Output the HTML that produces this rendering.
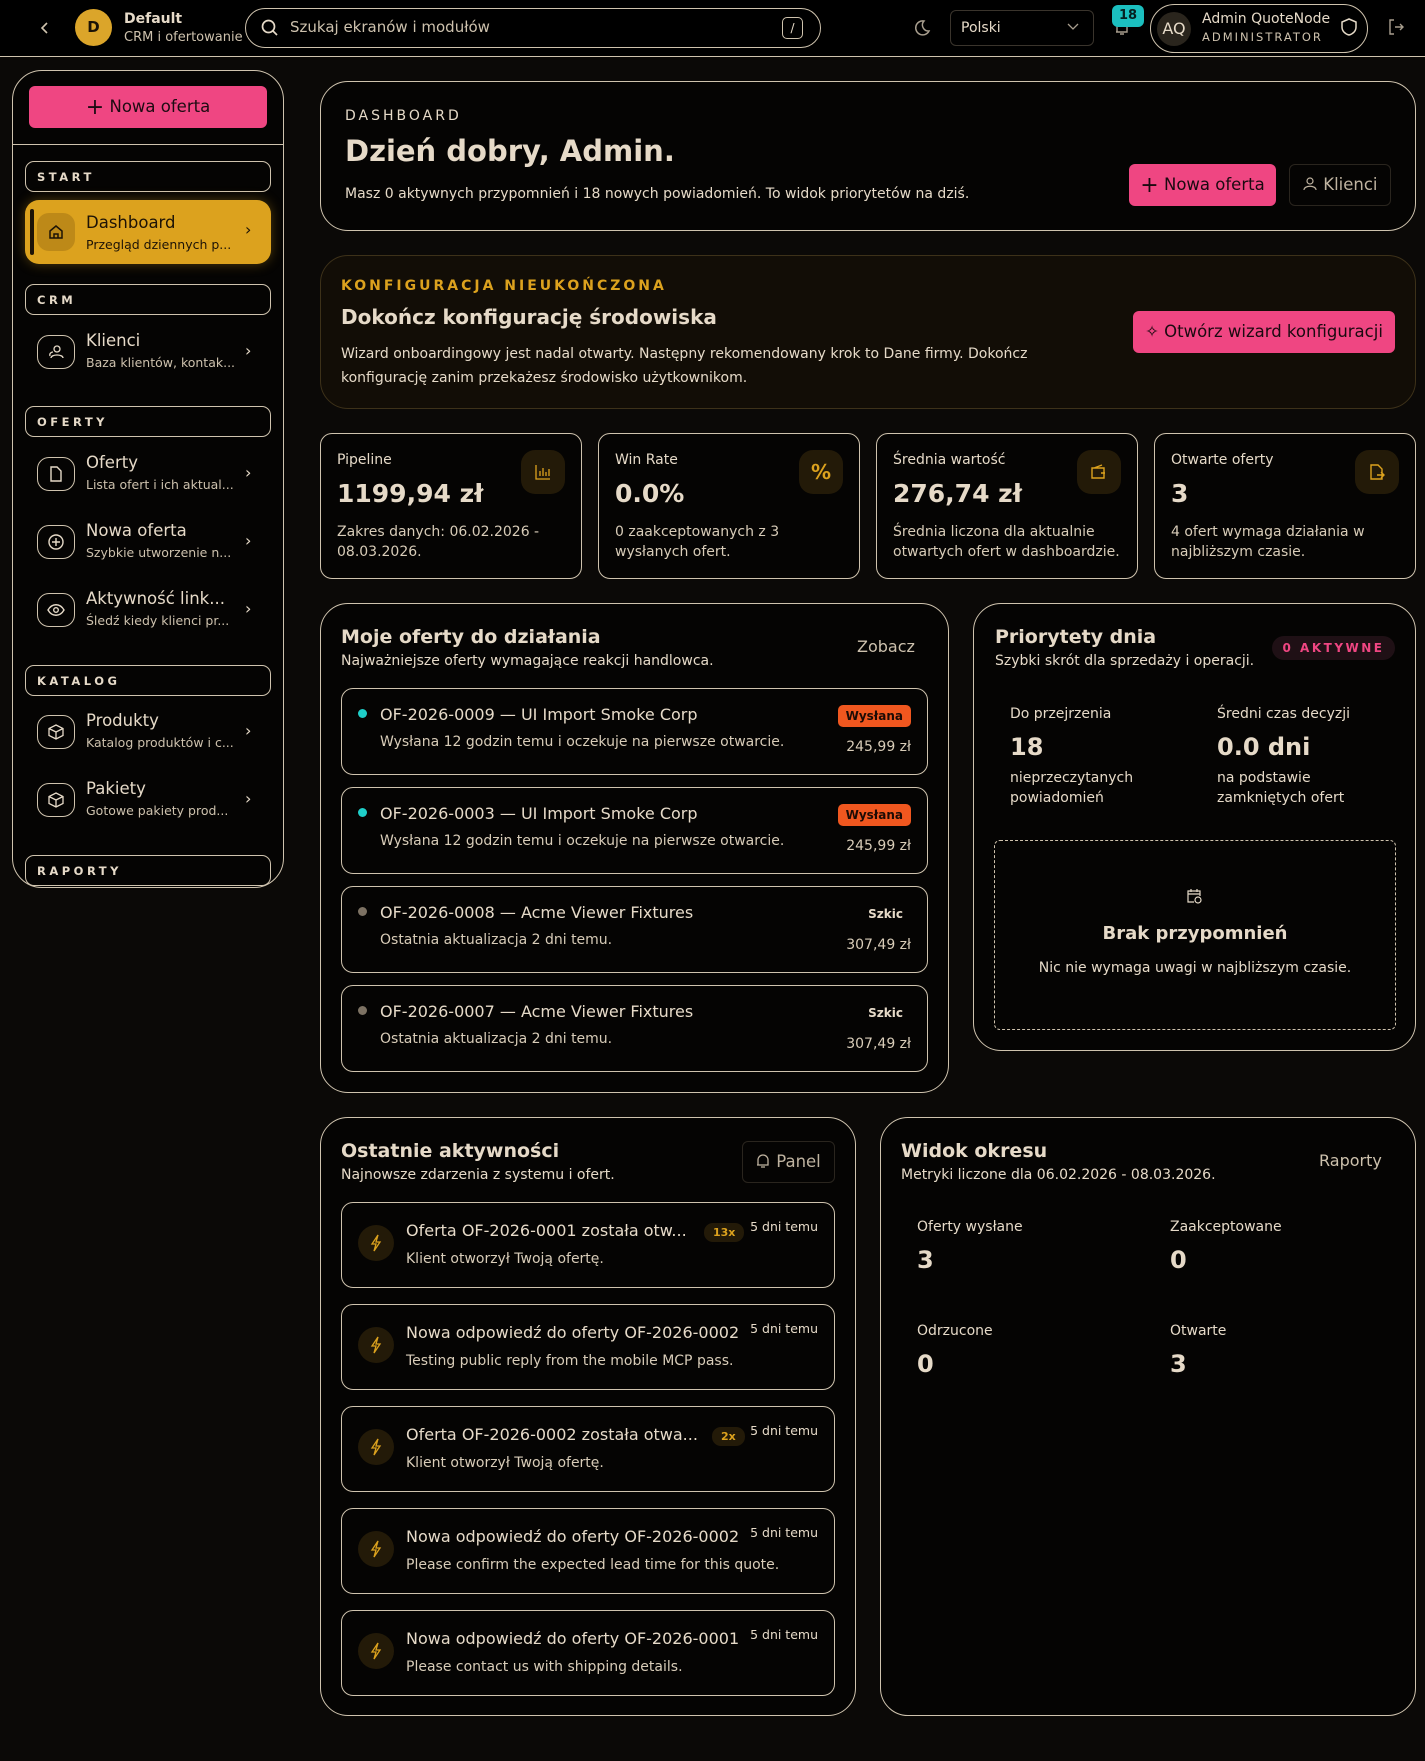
<!DOCTYPE html>
<html><head><meta charset="utf-8"><style>
*{box-sizing:border-box;margin:0;padding:0}
body{width:1425px;height:1761px;background:#0b0907;color:#e6dac8;font-family:"DejaVu Sans","Liberation Sans",sans-serif;position:relative;overflow:hidden;font-size:14px}
.a{position:absolute}
.card{position:absolute;border:1px solid #cfc3ae;border-radius:28px;background:#050403}
.box{position:absolute;border:1px solid #cfc3ae;border-radius:12px;background:#050403}
.muted{color:#cdc1ad}
.pink{background:#ef4682;color:#1a0a10;border-radius:6px}
.lbl{position:absolute;border:1px solid #cfc3ae;border-radius:9px;left:25px;width:246px;height:31px;font-size:11.5px;font-weight:bold;letter-spacing:3.5px;padding:8px 0 0 11px}
.nav{position:absolute;left:25px;width:246px;height:62px}
.nav .ic{position:absolute;left:12px;top:12px;width:38px;height:34px;border:1px solid #cfc3ae;border-radius:12px;display:flex;align-items:center;justify-content:center}
.nav .t{position:absolute;left:61px;top:8px;font-size:16.5px}
.nav .s{position:absolute;left:61px;top:32px;font-size:12.5px;color:#cdc1ad}
.nav .ch{position:absolute;left:220px;top:18px;font-size:16px}
.h3{font-size:19px;font-weight:bold}
.stat .l{position:absolute;left:16px;top:18px;font-size:14px}
.stat .v{position:absolute;left:16px;top:45px;font-size:25px;font-weight:bold}
.stat .d{position:absolute;left:16px;top:88px;font-size:14px;line-height:20px;color:#d8ccb8}
.stat .i{position:absolute;right:16px;top:16px;width:44px;height:44px;border-radius:14px;background:#231a08;display:flex;align-items:center;justify-content:center;color:#dca21e}
.off .dot{position:absolute;left:16px;top:20px;width:9px;height:9px;border-radius:50%}
.off .t{position:absolute;left:38px;top:16px;font-size:16px}
.off .s{position:absolute;left:38px;top:45px;font-size:14px;color:#d8ccb8}
.off .b{position:absolute;right:16px;top:16px;font-size:12px;font-weight:bold;padding:4px 8px}
.off .p{position:absolute;right:16px;top:50px;font-size:14px;color:#d8ccb8}
.act .ic{position:absolute;left:16px;top:22px;width:36px;height:36px;border-radius:50%;background:#231a08;display:flex;align-items:center;justify-content:center}
.act .t{position:absolute;left:64px;top:18px;font-size:16px}
.act .s{position:absolute;left:64px;top:48px;font-size:14px;color:#d8ccb8}
.act .tm{position:absolute;right:16px;top:16px;font-size:12.5px}
.act .x{position:absolute;top:20px;font-size:11px;font-weight:bold;color:#dca21e;background:#231a08;border-radius:9px;padding:3px 9px}
</style></head><body>
<!-- header -->
<div class="a" style="left:0;top:0;width:1425px;height:57px;border-bottom:1px solid #cfc3ae;background:#000"></div>
<svg class="a" style="left:38px;top:20px" width="14" height="16" viewBox="0 0 14 16"><path d="M9 3 L4 8 L9 13" stroke="#cfc3ae" stroke-width="1.6" fill="none"/></svg>
<div class="a" style="left:75px;top:9px;width:37px;height:37px;border-radius:50%;background:#dba52a;color:#1a1206;font-weight:bold;font-size:15px;text-align:center;line-height:37px">D</div>
<div class="a" style="left:124px;top:11px;font-weight:bold;font-size:14px">Default</div>
<div class="a muted" style="left:124px;top:30px;font-size:13px">CRM i ofertowanie</div>
<div class="a" style="left:245px;top:8px;width:576px;height:40px;border:1px solid #cfc3ae;border-radius:20px"></div>
<svg class="a" style="left:260px;top:18px" width="20" height="20" viewBox="0 0 20 20"><circle cx="8.5" cy="8.5" r="6" stroke="#e6dac8" stroke-width="1.7" fill="none"/><path d="M13 13 L17 17" stroke="#e6dac8" stroke-width="1.7"/></svg>
<div class="a muted" style="left:290px;top:18px;font-size:15px">Szukaj ekranów i modułów</div>
<div class="a" style="left:782px;top:17px;width:21px;height:22px;border:1px solid #cfc3ae;border-radius:5px;font-size:12px;text-align:center;line-height:20px">/</div>
<svg class="a" style="left:912px;top:18px" width="20" height="20" viewBox="0 0 20 20"><path d="M12 3 A7 7 0 1 0 17 13 A6 6 0 0 1 12 3Z" stroke="#a89e8e" stroke-width="1.5" fill="none"/></svg>
<div class="a" style="left:950px;top:10px;width:144px;height:36px;border:1px solid #3a342c;border-radius:6px;font-size:14px;padding:9px 0 0 10px">Polski</div>
<svg class="a" style="left:1066px;top:22px" width="14" height="10" viewBox="0 0 14 10"><path d="M2 2 L7 7 L12 2" stroke="#a89e8e" stroke-width="1.3" fill="none"/></svg>
<svg class="a" style="left:1112px;top:18px" width="20" height="20" viewBox="0 0 20 20"><path d="M5 14 V9 A5 5 0 0 1 15 9 V14 H4 M8 16 H12" stroke="#a89e8e" stroke-width="1.4" fill="none"/></svg>
<div class="a" style="left:1112px;top:5px;width:32px;height:22px;border-radius:6px;background:#1bbfbf;color:#062020;font-weight:bold;font-size:13px;text-align:center;line-height:22px">18</div>
<div class="a" style="left:1150px;top:4px;width:218px;height:49px;border:1px solid #cfc3ae;border-radius:25px"></div>
<div class="a" style="left:1157px;top:12px;width:34px;height:34px;border-radius:50%;background:#2a251d;font-size:16px;text-align:center;line-height:34px">AQ</div>
<div class="a" style="left:1202px;top:11px;font-size:14px">Admin QuoteNode</div>
<div class="a muted" style="left:1202px;top:30px;font-size:11.5px;letter-spacing:2px">ADMINISTRATOR</div>
<svg class="a" style="left:1340px;top:17px" width="18" height="20" viewBox="0 0 18 20"><path d="M9 2 L16 5 V10 C16 14 13 17 9 18 C5 17 2 14 2 10 V5Z" stroke="#e6dac8" stroke-width="1.5" fill="none"/></svg>
<svg class="a" style="left:1386px;top:17px" width="20" height="20" viewBox="0 0 20 20"><path d="M8 3 H4 V17 H8 M9 10 H17 M14 7 L17 10 L14 13" stroke="#a89e8e" stroke-width="1.4" fill="none"/></svg>

<!-- sidebar -->
<div class="a" style="left:12px;top:70px;width:272px;height:818px;border:1px solid #cfc3ae;border-radius:30px;background:#050403"></div>
<div class="a pink" style="left:29px;top:86px;width:238px;height:42px;color:#1d0b12;font-size:16.5px;text-align:center;line-height:42px"><span style="font-size:22px;vertical-align:-2px">+</span> Nowa oferta</div>
<div class="a" style="left:12px;top:144px;width:272px;border-top:1px solid #cfc3ae"></div>
<div class="lbl" style="top:161px">START</div>
<div class="nav" style="top:200px;height:64px;background:#dca21e;border-radius:14px;color:#1d1306;box-shadow:0 0 12px rgba(220,162,30,.35)">
<div class="a" style="left:5px;top:9px;width:4px;height:46px;background:#1d1306;border-radius:2px"></div>
<div class="a" style="left:12px;top:13px;width:38px;height:38px;border-radius:12px;background:#bd8918;display:flex;align-items:center;justify-content:center"><svg width="18" height="18" viewBox="0 0 18 18"><path d="M3 8 L9 3 L15 8 V15 H3Z M7 15 V11 H11 V15" stroke="#1d1306" stroke-width="1.5" fill="none"/></svg></div>
<div class="a" style="left:61px;top:13px;font-size:16.5px">Dashboard</div>
<div class="a" style="left:61px;top:37px;font-size:12.5px">Przegląd dziennych p...</div>
<div class="a" style="left:220px;top:20px;font-size:16px">›</div></div>
<div class="lbl" style="top:284px">CRM</div>
<div class="nav" style="top:323px"><div class="ic"><svg width="18" height="16" viewBox="0 0 18 16"><circle cx="10" cy="5" r="3" stroke="#e6dac8" fill="none" stroke-width="1.3"/><path d="M4 14 C4 10 16 10 16 14 M3 12 C2 9 5 8 6 8" stroke="#e6dac8" fill="none" stroke-width="1.3"/></svg></div><div class="t">Klienci</div><div class="s">Baza klientów, kontak...</div><div class="ch">›</div></div>
<div class="lbl" style="top:406px">OFERTY</div>
<div class="nav" style="top:445px"><div class="ic"><svg width="14" height="18" viewBox="0 0 14 18"><path d="M2 2 H8 L12 6 V16 H2Z" stroke="#e6dac8" fill="none" stroke-width="1.4"/></svg></div><div class="t">Oferty</div><div class="s">Lista ofert i ich aktual...</div><div class="ch">›</div></div>
<div class="nav" style="top:513px"><div class="ic"><svg width="18" height="18" viewBox="0 0 18 18"><circle cx="9" cy="9" r="7" stroke="#e6dac8" fill="none" stroke-width="1.4"/><path d="M9 5 V13 M5 9 H13" stroke="#e6dac8" stroke-width="1.4"/></svg></div><div class="t">Nowa oferta</div><div class="s">Szybkie utworzenie n...</div><div class="ch">›</div></div>
<div class="nav" style="top:581px"><div class="ic"><svg width="18" height="14" viewBox="0 0 18 14"><path d="M1 7 C5 0 13 0 17 7 C13 14 5 14 1 7Z" stroke="#e6dac8" fill="none" stroke-width="1.4"/><circle cx="9" cy="7" r="2.3" stroke="#e6dac8" fill="none" stroke-width="1.4"/></svg></div><div class="t">Aktywność link...</div><div class="s">Śledź kiedy klienci pr...</div><div class="ch">›</div></div>
<div class="lbl" style="top:665px">KATALOG</div>
<div class="nav" style="top:703px"><div class="ic"><svg width="18" height="18" viewBox="0 0 18 18"><path d="M9 2 L16 5.5 V12.5 L9 16 L2 12.5 V5.5Z M2 5.5 L9 9 L16 5.5 M9 9 V16" stroke="#e6dac8" fill="none" stroke-width="1.3"/></svg></div><div class="t">Produkty</div><div class="s">Katalog produktów i c...</div><div class="ch">›</div></div>
<div class="nav" style="top:771px"><div class="ic"><svg width="18" height="18" viewBox="0 0 18 18"><path d="M9 2 L16 5.5 V12.5 L9 16 L2 12.5 V5.5Z M2 5.5 L9 9 L16 5.5 M9 9 V16" stroke="#e6dac8" fill="none" stroke-width="1.3"/></svg></div><div class="t">Pakiety</div><div class="s">Gotowe pakiety prod...</div><div class="ch">›</div></div>
<div class="lbl" style="top:855px">RAPORTY</div>

<!-- hero -->
<div class="card" style="left:320px;top:81px;width:1096px;height:150px"></div>
<div class="a" style="left:345px;top:108px;font-size:14px;letter-spacing:3px">DASHBOARD</div>
<div class="a" style="left:345px;top:134px;font-size:29px;font-weight:bold">Dzień dobry, Admin.</div>
<div class="a" style="left:345px;top:186px;font-size:14px">Masz 0 aktywnych przypomnień i 18 nowych powiadomień. To widok priorytetów na dziś.</div>
<div class="a pink" style="left:1129px;top:164px;width:147px;height:42px;font-size:16.5px;text-align:center;line-height:42px"><span style="font-size:22px;vertical-align:-2px">+</span> Nowa oferta</div>
<div class="a" style="left:1289px;top:164px;width:102px;height:42px;border:1px solid #2a251e;border-radius:6px;font-size:16.5px;line-height:40px;padding-left:12px;color:#bfb3a0"><svg width="16" height="14" viewBox="0 0 16 14" style="vertical-align:-1px"><circle cx="8" cy="4" r="3" stroke="#bfb3a0" fill="none" stroke-width="1.2"/><path d="M2 13 C2 8 14 8 14 13" stroke="#bfb3a0" fill="none" stroke-width="1.2"/></svg> Klienci</div>

<!-- config -->
<div class="a" style="left:320px;top:255px;width:1096px;height:154px;border:1px solid #3d3119;border-radius:28px;background:#120d06"></div>
<div class="a" style="left:341px;top:278px;font-size:14px;font-weight:bold;letter-spacing:3px;color:#dca21e">KONFIGURACJA NIEUKOŃCZONA</div>
<div class="a" style="left:341px;top:305px;font-size:20px;font-weight:bold">Dokończ konfigurację środowiska</div>
<div class="a" style="left:341px;top:342px;font-size:14px;line-height:24px;width:720px">Wizard onboardingowy jest nadal otwarty. Następny rekomendowany krok to Dane firmy. Dokończ konfigurację zanim przekażesz środowisko użytkownikom.</div>
<div class="a pink" style="left:1133px;top:311px;width:262px;height:42px;font-size:16.5px;text-align:center;line-height:42px">✧ Otwórz wizard konfiguracji</div>

<!-- stats -->
<div class="box stat" style="left:320px;top:433px;width:262px;height:146px"><div class="l">Pipeline</div><div class="v">1199,94 zł</div><div class="d">Zakres danych: 06.02.2026 -<br>08.03.2026.</div><div class="i"><svg width="18" height="18" viewBox="0 0 18 18"><path d="M2 2 V16 H16 M6 13 V8 M9 13 V5 M12 13 V9 M15 13 V6" stroke="#dca21e" stroke-width="1.3" fill="none"/></svg></div></div>
<div class="box stat" style="left:598px;top:433px;width:262px;height:146px"><div class="l">Win Rate</div><div class="v">0.0%</div><div class="d">0 zaakceptowanych z 3<br>wysłanych ofert.</div><div class="i" style="font-size:20px;font-weight:bold">%</div></div>
<div class="box stat" style="left:876px;top:433px;width:262px;height:146px"><div class="l">Średnia wartość</div><div class="v">276,74 zł</div><div class="d">Średnia liczona dla aktualnie<br>otwartych ofert w dashboardzie.</div><div class="i"><svg width="18" height="16" viewBox="0 0 18 16"><path d="M2 4 H14 V14 H2Z M4 4 L12 1 M11 9 H15" stroke="#dca21e" stroke-width="1.4" fill="none"/></svg></div></div>
<div class="box stat" style="left:1154px;top:433px;width:262px;height:146px"><div class="l">Otwarte oferty</div><div class="v">3</div><div class="d">4 ofert wymaga działania w<br>najbliższym czasie.</div><div class="i"><svg width="18" height="18" viewBox="0 0 18 18"><path d="M3 2 H10 L14 6 V16 H3Z M9 12 H16 M13 9 L16 12 L13 15" stroke="#dca21e" stroke-width="1.4" fill="none"/></svg></div></div>

<!-- offers -->
<div class="card" style="left:320px;top:603px;width:629px;height:490px"></div>
<div class="a h3" style="left:341px;top:626px">Moje oferty do działania</div>
<div class="a" style="left:341px;top:653px;font-size:14px">Najważniejsze oferty wymagające reakcji handlowca.</div>
<div class="a muted" style="left:857px;top:637px;font-size:16px">Zobacz</div>
<div class="box off" style="left:341px;top:688px;width:587px;height:87px"><div class="dot" style="background:#1fcfc9"></div><div class="t">OF-2026-0009 — UI Import Smoke Corp</div><div class="s">Wysłana 12 godzin temu i oczekuje na pierwsze otwarcie.</div><div class="b" style="background:#f0571f;color:#1d0b05;border-radius:5px">Wysłana</div><div class="p">245,99 zł</div></div>
<div class="box off" style="left:341px;top:787px;width:587px;height:87px"><div class="dot" style="background:#1fcfc9"></div><div class="t">OF-2026-0003 — UI Import Smoke Corp</div><div class="s">Wysłana 12 godzin temu i oczekuje na pierwsze otwarcie.</div><div class="b" style="background:#f0571f;color:#1d0b05;border-radius:5px">Wysłana</div><div class="p">245,99 zł</div></div>
<div class="box off" style="left:341px;top:886px;width:587px;height:87px"><div class="dot" style="background:#7d7263"></div><div class="t">OF-2026-0008 — Acme Viewer Fixtures</div><div class="s">Ostatnia aktualizacja 2 dni temu.</div><div class="b">Szkic</div><div class="p">307,49 zł</div></div>
<div class="box off" style="left:341px;top:985px;width:587px;height:87px"><div class="dot" style="background:#7d7263"></div><div class="t">OF-2026-0007 — Acme Viewer Fixtures</div><div class="s">Ostatnia aktualizacja 2 dni temu.</div><div class="b">Szkic</div><div class="p">307,49 zł</div></div>

<!-- priorities -->
<div class="card" style="left:973px;top:603px;width:443px;height:448px"></div>
<div class="a h3" style="left:995px;top:626px">Priorytety dnia</div>
<div class="a" style="left:995px;top:653px;font-size:14px">Szybki skrót dla sprzedaży i operacji.</div>
<div class="a" style="left:1272px;top:636px;width:123px;height:24px;border-radius:12px;background:#1f1015;color:#ef4682;font-size:12px;font-weight:bold;letter-spacing:2.5px;text-align:center;line-height:24px">0 AKTYWNE</div>
<div class="a" style="left:1010px;top:706px;font-size:14px">Do przejrzenia</div>
<div class="a" style="left:1010px;top:733px;font-size:24px;font-weight:bold">18</div>
<div class="a" style="left:1010px;top:768px;font-size:14px;line-height:20px">nieprzeczytanych<br>powiadomień</div>
<div class="a" style="left:1217px;top:706px;font-size:14px">Średni czas decyzji</div>
<div class="a" style="left:1217px;top:733px;font-size:24px;font-weight:bold">0.0 dni</div>
<div class="a" style="left:1217px;top:768px;font-size:14px;line-height:20px">na podstawie<br>zamkniętych ofert</div>
<div class="a" style="left:994px;top:840px;width:402px;height:190px;border:1px dashed #cfc3ae;border-radius:6px"></div>
<svg class="a" style="left:1186px;top:888px" width="17" height="17" viewBox="0 0 17 17"><path d="M8 14 H2 V3 H14 V8 M2 6 H14 M5 1 V4 M11 1 V4" stroke="#e6dac8" stroke-width="1.2" fill="none"/><circle cx="12" cy="12" r="3" stroke="#e6dac8" stroke-width="1.2" fill="none"/></svg>
<div class="a" style="left:994px;top:923px;width:402px;text-align:center;font-size:18px;font-weight:bold">Brak przypomnień</div>
<div class="a" style="left:994px;top:960px;width:402px;text-align:center;font-size:14px">Nic nie wymaga uwagi w najbliższym czasie.</div>

<!-- activities -->
<div class="card" style="left:320px;top:1117px;width:536px;height:599px"></div>
<div class="a h3" style="left:341px;top:1140px">Ostatnie aktywności</div>
<div class="a" style="left:341px;top:1167px;font-size:14px">Najnowsze zdarzenia z systemu i ofert.</div>
<div class="a" style="left:742px;top:1141px;width:93px;height:42px;border:1px solid #2a251e;border-radius:6px;font-size:16.5px;line-height:40px;padding-left:12px;color:#bfb3a0"><svg width="16" height="16" viewBox="0 0 16 16" style="vertical-align:-2px"><path d="M3 12 V7 A5 5 0 0 1 13 7 V12 H2 M6 14 H10" stroke="#bfb3a0" stroke-width="1.3" fill="none"/></svg> Panel</div>
<div class="box act" style="left:341px;top:1202px;width:494px;height:86px"><div class="ic"><svg width="12" height="18" viewBox="0 0 12 18"><path d="M8 1 L2 10 H6 L4 17 L10 8 H6Z" stroke="#dca21e" stroke-width="1.3" fill="none"/></svg></div><div class="t">Oferta OF-2026-0001 została otw...</div><div class="x" style="left:362px">13x</div><div class="s">Klient otworzył Twoją ofertę.</div><div class="tm">5 dni temu</div></div>
<div class="box act" style="left:341px;top:1304px;width:494px;height:86px"><div class="ic"><svg width="12" height="18" viewBox="0 0 12 18"><path d="M8 1 L2 10 H6 L4 17 L10 8 H6Z" stroke="#dca21e" stroke-width="1.3" fill="none"/></svg></div><div class="t">Nowa odpowiedź do oferty OF-2026-0002</div><div class="s">Testing public reply from the mobile MCP pass.</div><div class="tm">5 dni temu</div></div>
<div class="box act" style="left:341px;top:1406px;width:494px;height:86px"><div class="ic"><svg width="12" height="18" viewBox="0 0 12 18"><path d="M8 1 L2 10 H6 L4 17 L10 8 H6Z" stroke="#dca21e" stroke-width="1.3" fill="none"/></svg></div><div class="t">Oferta OF-2026-0002 została otwa...</div><div class="x" style="left:370px">2x</div><div class="s">Klient otworzył Twoją ofertę.</div><div class="tm">5 dni temu</div></div>
<div class="box act" style="left:341px;top:1508px;width:494px;height:86px"><div class="ic"><svg width="12" height="18" viewBox="0 0 12 18"><path d="M8 1 L2 10 H6 L4 17 L10 8 H6Z" stroke="#dca21e" stroke-width="1.3" fill="none"/></svg></div><div class="t">Nowa odpowiedź do oferty OF-2026-0002</div><div class="s">Please confirm the expected lead time for this quote.</div><div class="tm">5 dni temu</div></div>
<div class="box act" style="left:341px;top:1610px;width:494px;height:86px"><div class="ic"><svg width="12" height="18" viewBox="0 0 12 18"><path d="M8 1 L2 10 H6 L4 17 L10 8 H6Z" stroke="#dca21e" stroke-width="1.3" fill="none"/></svg></div><div class="t">Nowa odpowiedź do oferty OF-2026-0001</div><div class="s">Please contact us with shipping details.</div><div class="tm">5 dni temu</div></div>

<!-- period -->
<div class="card" style="left:880px;top:1117px;width:536px;height:599px"></div>
<div class="a h3" style="left:901px;top:1140px">Widok okresu</div>
<div class="a" style="left:901px;top:1167px;font-size:14px">Metryki liczone dla 06.02.2026 - 08.03.2026.</div>
<div class="a muted" style="left:1319px;top:1151px;font-size:16px">Raporty</div>
<div class="a" style="left:917px;top:1219px;font-size:14px">Oferty wysłane</div>
<div class="a" style="left:917px;top:1246px;font-size:24px;font-weight:bold">3</div>
<div class="a" style="left:1170px;top:1219px;font-size:14px">Zaakceptowane</div>
<div class="a" style="left:1170px;top:1246px;font-size:24px;font-weight:bold">0</div>
<div class="a" style="left:917px;top:1323px;font-size:14px">Odrzucone</div>
<div class="a" style="left:917px;top:1350px;font-size:24px;font-weight:bold">0</div>
<div class="a" style="left:1170px;top:1323px;font-size:14px">Otwarte</div>
<div class="a" style="left:1170px;top:1350px;font-size:24px;font-weight:bold">3</div>
</body></html>
